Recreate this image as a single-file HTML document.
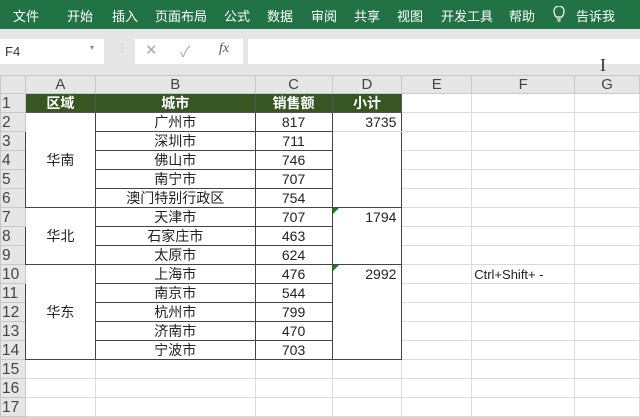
<!DOCTYPE html><html><head><meta charset="utf-8"><style>
*{margin:0;padding:0;box-sizing:border-box}
body{width:640px;height:409px;overflow:hidden;background:#fff;font-family:"Liberation Sans","Noto Sans CJK SC",sans-serif;position:relative}
.rib{position:absolute;left:0;top:0;width:640px;height:29px;background:#217346;color:#fff;font-size:13px}
.rib span{position:absolute;top:6px}
.fb{position:absolute;left:0;top:29px;width:640px;height:47px;background:#e6e6e6}
.box{position:absolute;background:#fff}
table{position:absolute;left:0;top:75px;border-collapse:collapse;table-layout:fixed;font-size:14px;color:#222}
td{height:19px;border:1px solid #dadada;text-align:center;padding:0;overflow:hidden;white-space:nowrap;line-height:17px}
tr.h td{height:18px;background:#e6e6e6;border-color:#c8c8c8;color:#444;font-size:15px}
td.r{background:#e6e6e6;color:#444;text-align:left;padding-left:1px;border-color:#c8c8c8;font-size:15.5px;line-height:17px}
.g{background:#375623;color:#fff;font-weight:bold;border-color:#555}
.k{border:1px solid #444}
.num{text-align:right;padding-right:5px}
.tri{position:relative}
.tri:before{content:"";position:absolute;left:0;top:0;border-top:6px solid #1e7a1e;border-right:6px solid transparent}
</style></head><body>
<div class="rib"><span style="left:13px">文件</span><span style="left:67px">开始</span><span style="left:112px">插入</span><span style="left:155px">页面布局</span><span style="left:224px">公式</span><span style="left:267px">数据</span><span style="left:311px">审阅</span><span style="left:354px">共享</span><span style="left:397px">视图</span><span style="left:441px">开发工具</span><span style="left:509px">帮助</span>
<svg style="position:absolute;left:553px;top:6px" width="12" height="17" viewBox="0 0 12 17"><path d="M3 11 C1 8 1 6 1 5 A5 5 0 0 1 11 5 C11 6 11 8 9 11 Z M4 13h4M4.5 15h3" stroke="#fff" fill="none" stroke-width="1.2"/></svg>
<span style="left:576px">告诉我</span></div>
<div class="fb">
<div class="box" style="left:0;top:10px;width:104px;height:25px;font-size:13px;color:#333;padding:5px 0 0 5px">F4<span style="position:absolute;left:90px;top:4px;font-size:8px;color:#888">▾</span></div>
<div style="position:absolute;left:117px;top:14px;color:#aaa;font-size:10px">⋮</div>
<div class="box" style="left:135px;top:10px;width:108px;height:25px;color:#aaa;font-size:15px"><span style="position:absolute;left:10px;top:2px">✕</span><span style="position:absolute;left:45px;top:2px">✓</span><span style="position:absolute;left:84px;top:2px;font-family:'Liberation Serif',serif;font-style:italic;color:#555;font-size:14px">fx</span></div>
<div class="box" style="left:248px;top:10px;width:392px;height:25px"></div>
<div style="position:absolute;left:600px;top:26px;font-size:18px;color:#333;font-family:'Liberation Serif',serif">I</div>
</div>
<table>
<colgroup><col style="width:25px"><col style="width:70px"><col style="width:160px"><col style="width:77px"><col style="width:70px"><col style="width:70px"><col style="width:103px"><col style="width:65px"></colgroup>
<tr class="h"><td style="background:#e6e6e6"></td><td>A</td><td>B</td><td>C</td><td>D</td><td>E</td><td>F</td><td>G</td></tr>
<tr><td class="r">1</td><td class="g">区域</td><td class="g">城市</td><td class="g">销售额</td><td class="g">小计</td><td></td><td></td><td></td></tr>
<tr><td class="r">2</td><td class="k" rowspan="5" style="border-bottom:1px solid #444">华南</td><td class="k">广州市</td><td class="k">817</td><td class="num" style="border-right:1px solid #444">3735</td><td></td><td></td><td></td></tr>
<tr><td class="r">3</td><td class="k">深圳市</td><td class="k">711</td><td style="border:none;border-right:1px solid #444"></td><td></td><td></td><td></td></tr>
<tr><td class="r">4</td><td class="k">佛山市</td><td class="k">746</td><td style="border:none;border-right:1px solid #444"></td><td></td><td></td><td></td></tr>
<tr><td class="r">5</td><td class="k">南宁市</td><td class="k">707</td><td style="border:none;border-right:1px solid #444"></td><td></td><td></td><td></td></tr>
<tr><td class="r">6</td><td class="k">澳门特别行政区</td><td class="k">754</td><td style="border:none;border-right:1px solid #444;border-bottom:1px solid #444"></td><td></td><td></td><td></td></tr>
<tr><td class="r">7</td><td class="k" rowspan="3">华北</td><td class="k">天津市</td><td class="k">707</td><td class="num tri" style="border:none;border-right:1px solid #444">1794</td><td></td><td></td><td></td></tr>
<tr><td class="r">8</td><td class="k">石家庄市</td><td class="k">463</td><td style="border:none;border-right:1px solid #444"></td><td></td><td></td><td></td></tr>
<tr><td class="r">9</td><td class="k">太原市</td><td class="k">624</td><td style="border:none;border-right:1px solid #444;border-bottom:1px solid #444"></td><td></td><td></td><td></td></tr>
<tr><td class="r">10</td><td class="k" rowspan="5">华东</td><td class="k">上海市</td><td class="k">476</td><td class="num tri" style="border:none;border-right:1px solid #444">2992</td><td></td><td style="text-align:left;padding-left:2px;font-size:13px">Ctrl+Shift+ -</td><td></td></tr>
<tr><td class="r">11</td><td class="k">南京市</td><td class="k">544</td><td style="border:none;border-right:1px solid #444"></td><td></td><td></td><td></td></tr>
<tr><td class="r">12</td><td class="k">杭州市</td><td class="k">799</td><td style="border:none;border-right:1px solid #444"></td><td></td><td></td><td></td></tr>
<tr><td class="r">13</td><td class="k">济南市</td><td class="k">470</td><td style="border:none;border-right:1px solid #444"></td><td></td><td></td><td></td></tr>
<tr><td class="r">14</td><td class="k">宁波市</td><td class="k">703</td><td style="border:none;border-right:1px solid #444;border-bottom:1px solid #444"></td><td></td><td></td><td></td></tr>
<tr><td class="r">15</td><td></td><td></td><td></td><td></td><td></td><td></td><td></td></tr>
<tr><td class="r">16</td><td></td><td></td><td></td><td></td><td></td><td></td><td></td></tr>
<tr><td class="r">17</td><td></td><td></td><td></td><td></td><td></td><td></td><td></td></tr>
</table>
</body></html>
